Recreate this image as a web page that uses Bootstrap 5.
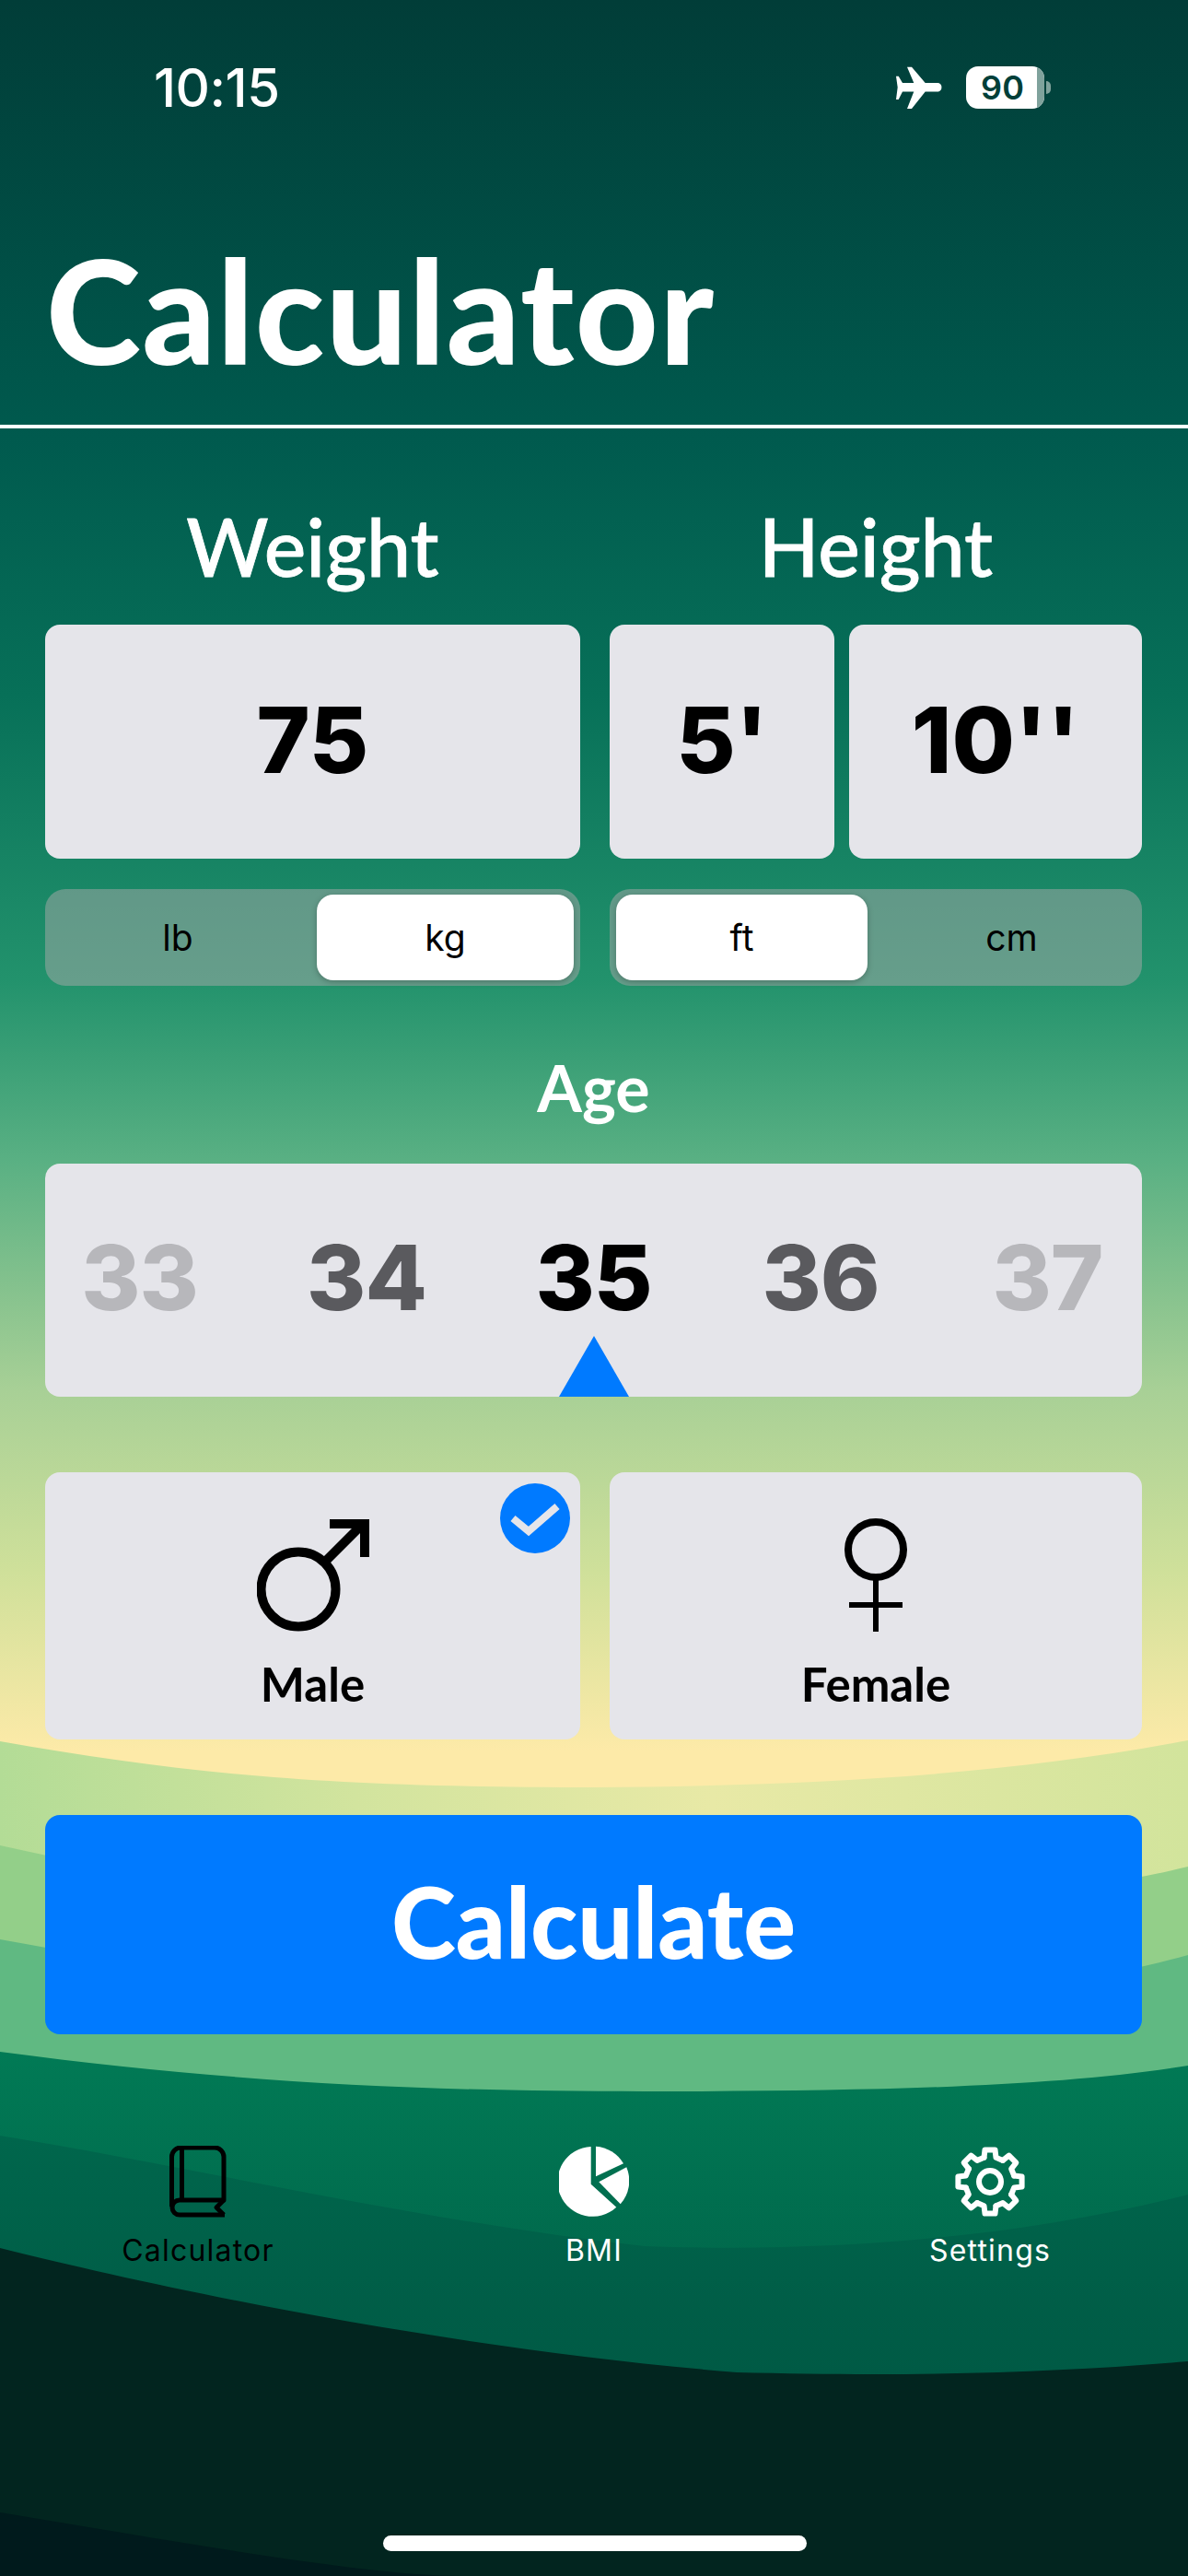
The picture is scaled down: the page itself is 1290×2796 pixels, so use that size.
<!doctype html>
<html lang="en">
<head>
  <meta charset="UTF-8">
  <title>Calculator</title>
  <meta name="viewport" content="width=device-width,initial-scale=1">
  <link href="https://cdn.jsdelivr.net/npm/bootstrap@5.3.0/dist/css/bootstrap.min.css" rel="stylesheet">
  <style>
    html, body { margin:0; background:#001a1c; }
    .screen { position:relative; width:1290px; height:2796px; overflow:hidden; font-family:"Lato","Liberation Sans",sans-serif; color:#fff; }
    .scenery { position:absolute; left:0; top:0; width:1290px; height:2796px; }
    .content { position:relative; height:100%; }
    .status-bar { height:190px; padding-left:167px; }
    .status-time { font:500 58px/66px "Inter",sans-serif; letter-spacing:-.5px; width:806px; }
    .battery { position:relative; width:85px; height:46px; margin-left:24px; border-radius:13px; background:#fff; color:#003f39; font:600 36px/46px "Inter",sans-serif; text-align:center; padding-right:6px; overflow:hidden; }
    .battery-end { width:5px; height:14px; margin-left:2px; background:#7fa29c; border-radius:0 7px 7px 0; }
    .battery-used { position:absolute; right:0; top:0; bottom:0; width:8px; background:#7fa29c; }
    .page-title { font:900 156px/150px "Lato",sans-serif; margin:0; padding:71px 0 0 50px; height:271px; letter-spacing:1.5px; }
    .header-rule { height:4px; background:#fff; opacity:1; border:0; margin:0; }
    .form-area { padding:0 50px 0 49px; }
    .col-weight { width:581px; }
    .col-height { width:578px; }
    .gap-cols { gap:32px; }
    .field-title { font:500 86px/86px "Lato",sans-serif; -webkit-text-stroke:.8px #fff; text-align:center; height:213px; padding-top:85px; margin:0; }
    .tile { background:#e5e5ea; border-radius:16px; color:#000; }
    .value-tile { height:254px; font:800 99px/250px "Inter",sans-serif; text-align:center; }
    .feet-tile { flex:0 0 244px; }
    .inches-tile { flex:1 1 0; }
    .unit-bar { height:105px; margin-top:33px; border-radius:22px; background:rgba(170,170,170,.5); padding:6px 7px; color:#000; font:400 39px/93px "Inter",sans-serif; }
    .unit-opt { flex:1 1 0; text-align:center; border-radius:18px; }
    .unit-on { flex:0 0 279px; background:#fff; box-shadow:0 2px 6px rgba(0,0,0,.25); }
    .unit-first { flex:0 0 273px; }
    .unit-lb { padding-right:14px; }
    .unit-cm { padding-left:22px; }
    .age-label { font:700 70px/1 "Lato",sans-serif; text-align:center; margin:75px 0 0; height:118px; }
    .age-tile { position:relative; height:253px; padding-top:65px; }
    .age-num { flex:0 0 246.5px; text-align:center; font:800 98px/118px "Inter",sans-serif; letter-spacing:-1px; }
    .age-far { color:#b7b7bb; }
    .age-near { color:#5a5a5e; }
    .age-pointer { position:absolute; left:558px; bottom:0; }
    .gender-row { margin-top:82px; }
    .gender-tile { position:relative; width:581px; height:290px; text-align:center; font:700 51px/1 "Lato",sans-serif; padding-top:50px; }
    .gender-tile + .gender-tile { width:578px; }
    .gender-tile svg.sym { display:block; margin:0 auto; }
    .gender-name { margin-top:30px; }
    .tick { position:absolute; left:494px; top:12px; }
    .calc-btn { display:block; width:100%; height:238px; margin-top:82px; border:0; border-radius:16px; background:#007aff; color:#fff; font:900 106px/1 "Lato",sans-serif; padding:0 0 8px; }
    .calc-btn:hover { background:#007aff; color:#fff; }
    .tab-bar { padding-top:121px; }
    .tab-item { width:430px; text-align:center; font:400 32px/1 "Inter",sans-serif; letter-spacing:1.2px; color:#fff; }
    .tab-item svg { display:block; margin:0 auto 20px; }
    .tab-dark { color:#000; }
    .home-bar { position:absolute; left:416px; top:2752px; width:460px; height:17px; background:#fff; border-radius:9px; }
  </style>
</head>
<body>
<div class="screen">

  <!-- wallpaper -->
  <svg class="scenery" viewBox="0 0 1290 2796" preserveAspectRatio="none" aria-hidden="true">
    <defs>
      <linearGradient id="sky" x1="0" y1="0" x2="0" y2="1">
        <stop offset="0" stop-color="#013d38"/>
        <stop offset=".17" stop-color="#005a4e"/>
        <stop offset=".27" stop-color="#077058"/>
        <stop offset=".38" stop-color="#22926c"/>
        <stop offset=".45" stop-color="#59b083"/>
        <stop offset=".54" stop-color="#a8d096"/>
        <stop offset=".61" stop-color="#cfe09a"/>
        <stop offset=".68" stop-color="#fdeaa8"/>
        <stop offset="1" stop-color="#fdeaa8"/>
      </linearGradient>
      <linearGradient id="hillPale" x1="0" y1="0" x2="1" y2="0">
        <stop offset="0" stop-color="#b3dc96"/>
        <stop offset=".3" stop-color="#d2e49e"/>
        <stop offset=".6" stop-color="#e8e9a6"/>
        <stop offset="1" stop-color="#d2e49c"/>
      </linearGradient>
      <linearGradient id="hillMid" x1="0" y1="0" x2="0" y2="1">
        <stop offset="0" stop-color="#017a55"/>
        <stop offset="1" stop-color="#00503f"/>
      </linearGradient>
      <linearGradient id="hillLow" x1="0" y1="0" x2="0" y2="1">
        <stop offset="0" stop-color="#00664c"/>
        <stop offset="1" stop-color="#00503f"/>
      </linearGradient>
    </defs>
    <rect width="1290" height="2796" fill="url(#sky)"/>
    <path d="M0 1890C200 1925 350 1940 645 1940C900 1938 1100 1925 1290 1889V2796H0Z" fill="url(#hillPale)"/>
    <path d="M0 2003C250 2060 500 2080 700 2085C950 2080 1150 2060 1290 2026V2796H0Z" fill="#93cf89"/>
    <path d="M0 2105C300 2160 500 2190 700 2190C950 2190 1150 2160 1290 2122V2796H0Z" fill="#60b982"/>
    <path d="M0 2227C250 2260 450 2270 700 2270C950 2270 1150 2265 1290 2242V2796H0Z" fill="url(#hillMid)"/>
    <path d="M0 2318C200 2350 450 2410 700 2438C900 2445 1100 2430 1290 2382V2796H0Z" fill="url(#hillLow)"/>
    <path d="M0 2440C200 2490 500 2550 800 2575C1000 2580 1150 2575 1290 2563V2796H0Z" fill="#02251f"/>
    <path d="M0 2727C200 2760 400 2796 500 2796H0Z" fill="#001a1c"/>
  </svg>

  <div class="content">
    <div class="status-bar d-flex align-items-center">
      <div class="status-time">10:15</div>
      <svg width="52" height="46" viewBox="0 0 52 46"><path fill="#fff" d="M12 .7H17L31.700 18H46a5 5 0 0 1 0 9.500H31.700L17 46H12L19.300 27.500H7L2.700 36H0L1.700 22.700 0 10.700H2.700L7 18H19.300Z"/></svg>
      <div class="battery">90<span class="battery-used"></span></div>
      <div class="battery-end"></div>
    </div>

    <h1 class="page-title">Calculator</h1>
    <hr class="header-rule">

    <div class="form-area">
      <div class="d-flex gap-cols">
        <div class="col-weight">
          <h2 class="field-title">Weight</h2>
          <div class="tile value-tile">75</div>
          <div class="unit-bar d-flex">
            <div class="unit-opt unit-lb">lb</div>
            <div class="unit-opt unit-on">kg</div>
          </div>
        </div>
        <div class="col-height">
          <h2 class="field-title">Height</h2>
          <div class="d-flex gap-3">
            <div class="tile value-tile feet-tile">5'</div>
            <div class="tile value-tile inches-tile">10''</div>
          </div>
          <div class="unit-bar d-flex">
            <div class="unit-opt unit-on unit-first">ft</div>
            <div class="unit-opt unit-cm">cm</div>
          </div>
        </div>
      </div>

      <div class="age-label">Age</div>
      <div class="tile age-tile d-flex justify-content-center">
        <div class="age-num age-far">33</div>
        <div class="age-num age-near">34</div>
        <div class="age-num">35</div>
        <div class="age-num age-near">36</div>
        <div class="age-num age-far">37</div>
        <svg class="age-pointer" width="76" height="66" viewBox="0 0 76 66"><path fill="#007aff" d="M38 0 76 66H0Z"/></svg>
      </div>

      <div class="d-flex gap-cols gender-row">
        <div class="tile gender-tile">
          <svg class="sym" width="122" height="124" viewBox="0 0 122 124" fill="none" stroke="#000"><circle cx="45" cy="77" r="40.500" stroke-width="10"/><path stroke-width="10" d="M74 47 116 5"/><path stroke-width="10" d="M79 6H117V42"/></svg>
          <div class="gender-name">Male</div>
          <svg class="tick" width="76" height="76" viewBox="0 0 76 76"><circle cx="38" cy="38" r="38" fill="#007aff"/><path d="M14 38 31 52 62 25" fill="none" stroke="#e5e5ea" stroke-width="8"/></svg>
        </div>
        <div class="tile gender-tile">
          <svg class="sym" width="122" height="124" viewBox="0 0 122 124" fill="none" stroke="#000"><circle cx="61" cy="34" r="30" stroke-width="8"/><path stroke-width="6" d="M61 66v57M32 94h58"/></svg>
          <div class="gender-name">Female</div>
        </div>
      </div>

      <button class="btn calc-btn" type="button">Calculate</button>
    </div>

    <div class="tab-bar d-flex">
      <div class="tab-item tab-dark">
        <svg width="62" height="78" viewBox="0 0 62 78" fill="none" stroke="#000" stroke-width="5" stroke-linejoin="round"><path d="M2.500 66V12a10 10 0 0 1 10-10H49a10 10 0 0 1 10 10V59H11a8 8 0 0 0 0 16H60"/><path d="M13.500 3V59"/><path d="M59 59 51 67 59 75"/></svg>
        Calculator
      </div>
      <div class="tab-item">
        <svg width="76" height="78" viewBox="0 0 76 78"><path fill="#fff" d="M34.700.9V41.700L62.300 66.700A38 38 0 1 1 34.700.9Z"/><path fill="#fff" d="M40 .7V33.300L70 19.300A38 38 0 0 0 40 .7Z"/><path fill="#fff" d="M43.300 39.300 73.300 23.300A38 38 0 0 1 66.700 63.300Z"/></svg>
        BMI
      </div>
      <div class="tab-item">
        <svg width="80" height="78" viewBox="1 1 78 78" fill="none" stroke="#fff" stroke-width="6" stroke-linejoin="round" stroke-linecap="round">
          <circle cx="40" cy="40" r="12"/>
          <g id="gearTooth"><path d="M33.500 13.800 34.500 5.400H45.500L46.500 13.800 53.900 16.900"/></g>
          <use href="#gearTooth" transform="rotate(45 40 40)"/>
          <use href="#gearTooth" transform="rotate(90 40 40)"/>
          <use href="#gearTooth" transform="rotate(135 40 40)"/>
          <use href="#gearTooth" transform="rotate(180 40 40)"/>
          <use href="#gearTooth" transform="rotate(225 40 40)"/>
          <use href="#gearTooth" transform="rotate(270 40 40)"/>
          <use href="#gearTooth" transform="rotate(315 40 40)"/>
        </svg>
        Settings
      </div>
    </div>

    <div class="home-bar"></div>
  </div>
</div>
</body>
</html>
